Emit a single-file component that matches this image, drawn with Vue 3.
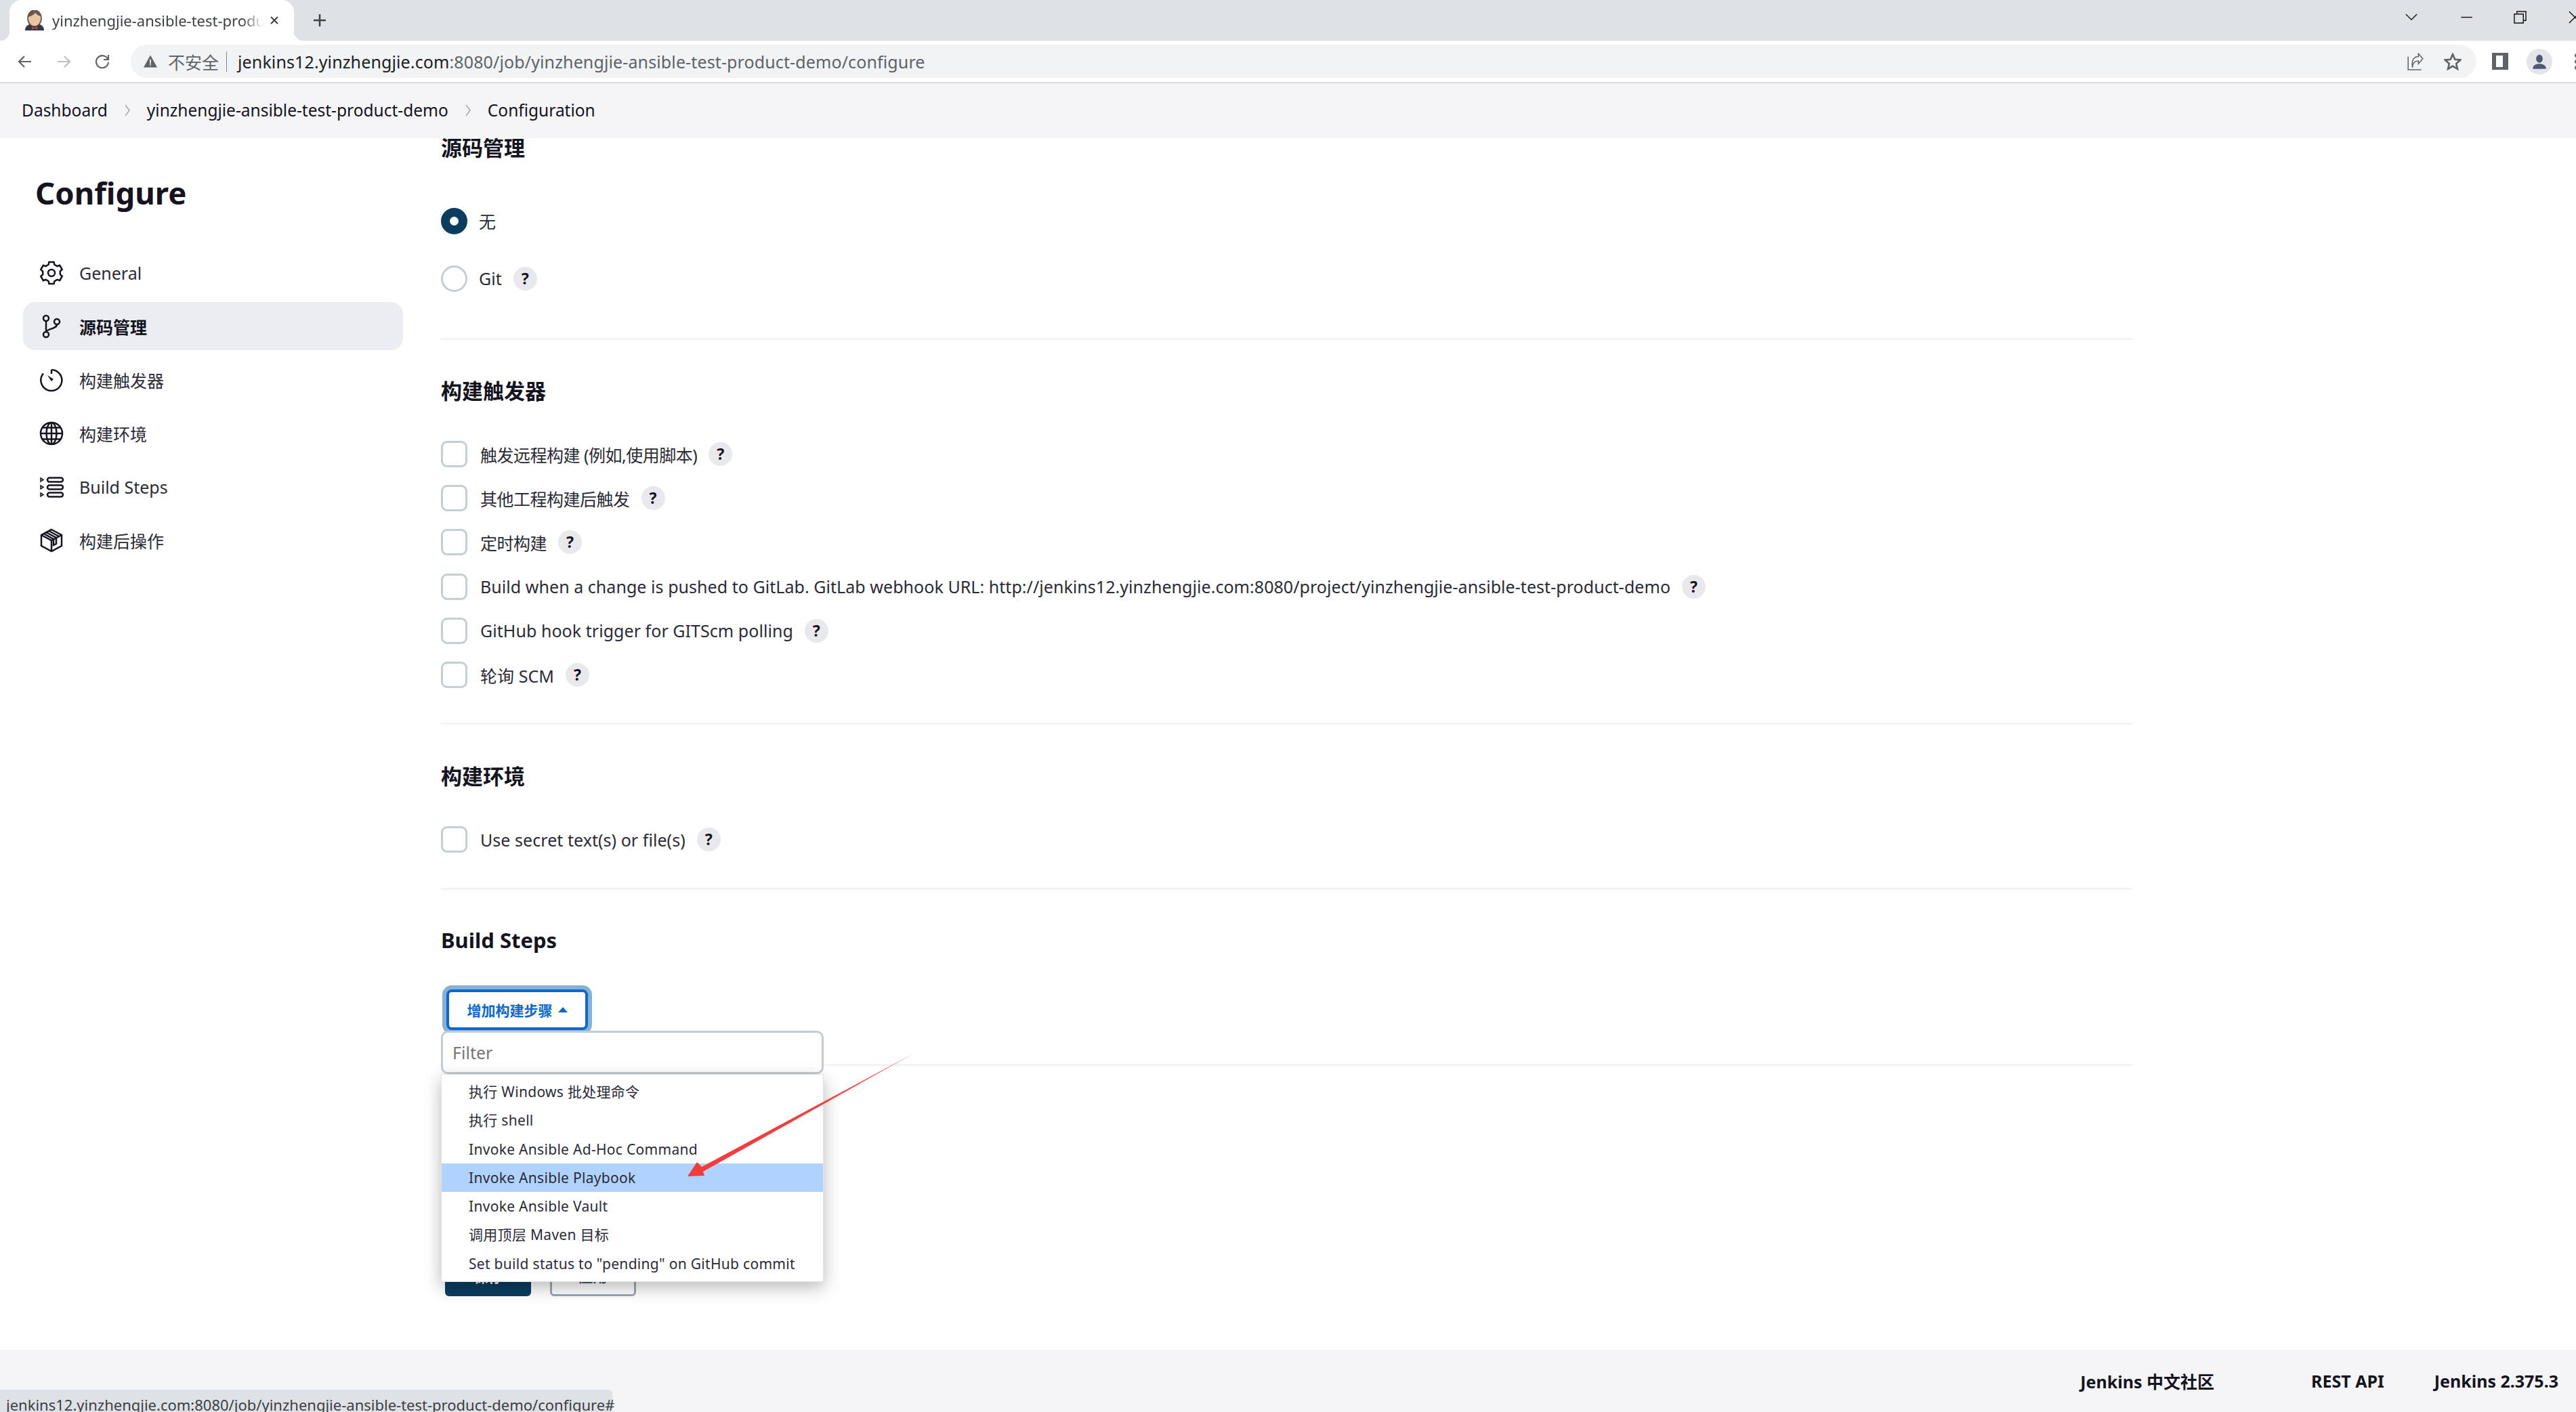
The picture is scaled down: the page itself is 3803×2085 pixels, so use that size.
<template>
  <div class="page">
    <!-- browser tabs -->
    <div class="tabstrip">
      <div class="tab">
        <svg class="favicon" viewBox="0 0 30 30">
          <path d="M1 30c0-7 5-10 14-10s14 3 14 10z" fill="#2f3a4a" />
          <ellipse cx="15" cy="12" rx="10" ry="12" fill="#e8c5a5" stroke="#5a4638" stroke-width="1.5" />
          <path d="M6 10C6 3 11 0 15 0s9 3 9 9c-4-1-6-3-8-5-2 3-6 5-10 6z" fill="#6b5a4c" />
          <path d="M11 24l4 2 4-2v5l-4-2-4 2z" fill="#d33833" />
        </svg>
        <span class="tab-title">yinzhengjie-ansible-test-product-demo</span>
        <svg class="tab-close" viewBox="0 0 14 14"><path d="M2 2l10 10M12 2L2 12" /></svg>
      </div>
      <svg class="new-tab" viewBox="0 0 20 20"><path d="M10 1v18M1 10h18" /></svg>
      <div class="spacer"></div>
      <svg class="win chev" viewBox="0 0 20 12"><path d="M1 1l9 9 9-9" /></svg>
      <svg class="win min" viewBox="0 0 20 12"><path d="M1 6h18" /></svg>
      <svg class="win restore" viewBox="0 0 20 20"><path d="M1 5h14v14H1zM5 5V1h14v14h-4" /></svg>
      <svg class="win close" viewBox="0 0 20 20"><path d="M1 1l18 18M19 1L1 19" /></svg>
    </div>

    <!-- address bar -->
    <div class="toolbar">
      <svg class="nav-ic" viewBox="0 0 24 24"><path d="M21 12H4M11 4l-8 8 8 8" /></svg>
      <svg class="nav-ic off" viewBox="0 0 24 24"><path d="M3 12h17M13 4l8 8-8 8" /></svg>
      <svg class="nav-ic" viewBox="0 0 24 24"><path d="M20 8a9 9 0 1 0 1 5M21 2v7h-7" /></svg>
      <div class="omnibox">
        <svg class="warn" viewBox="0 0 22 20">
          <path d="M11 0l11 20H0z" fill="#5f6368" />
          <path d="M10 7h2v7h-2zM10 15h2v2h-2z" fill="#f1f3f4" />
        </svg>
        <span class="insecure">不安全</span>
        <span class="sep"></span>
        <span class="url"><b>jenkins12.yinzhengjie.com</b>:8080/job/yinzhengjie-ansible-test-product-demo/configure</span>
        <div class="spacer"></div>
        <svg class="bar-ic share" viewBox="0 0 24 24">
          <path d="M2 5v18h18M8 20c0-6 3-9 8-9v4l6-7-6-7v4c-6 0-10 5-8 15z" />
        </svg>
        <svg class="bar-ic star" viewBox="0 0 24 24">
          <path d="M12 2l3 7 7.500 .7-5.700 5 1.700 7.300-6.500-3.900-6.500 3.900 1.700-7.300-5.700-5 7.500-.7z" />
        </svg>
      </div>
      <span class="side-panel"><i></i></span>
      <span class="avatar">
        <svg viewBox="0 0 24 24"><ellipse cx="12" cy="8" rx="4.500" ry="5.500" /><path d="M3 22c0-5 4-7 9-7s9 2 9 7z" /></svg>
      </span>
      <span class="kebab"><i></i><i></i><i></i></span>
    </div>

    <!-- breadcrumbs -->
    <div class="crumbs">
      <template v-for="(c, i) in crumbs" :key="c">
        <svg v-if="i > 0" class="crumb-sep" viewBox="0 0 10 20"><path d="M2 2l6 8-6 8" /></svg>
        <span>{{ c }}</span>
      </template>
    </div>

    <div class="content">
      <aside class="sidebar">
        <h1 class="title">Configure</h1>
        <div class="nav-item">
          <svg class="side-ic" viewBox="0 0 36 36"><path :d="gearPath" /><circle cx="18" cy="18" r="5" /></svg>
          <span>General</span>
        </div>
        <div class="nav-item active">
          <svg class="side-ic" viewBox="0 0 36 36">
            <circle cx="10" cy="6" r="4" /><circle cx="10" cy="30" r="4" /><circle cx="26" cy="11" r="4" />
            <path d="M10 10v16M26 15c0 7-14 6-16 11" />
          </svg>
          <span>源码管理</span>
        </div>
        <div class="nav-item">
          <svg class="side-ic" viewBox="0 0 36 36">
            <path d="M18 3a15.500 15.500 0 1 1-12 5.500M18 3v6" />
            <path class="needle" d="M12 11l9 6-3 3z" />
          </svg>
          <span>构建触发器</span>
        </div>
        <div class="nav-item">
          <svg class="side-ic" viewBox="0 0 36 36">
            <circle cx="18" cy="18" r="16" />
            <ellipse cx="18" cy="18" rx="7.500" ry="16" />
            <path d="M18 2v32M2 18h32M5 9.500h26M5 26.500h26" />
          </svg>
          <span>构建环境</span>
        </div>
        <div class="nav-item">
          <svg class="side-ic" viewBox="0 0 36 36">
            <rect x="12" y="4.500" width="23" height="6" rx="3" />
            <rect x="12" y="15.500" width="23" height="6" rx="3" />
            <rect x="12" y="26.500" width="23" height="6" rx="3" />
            <path class="thin" d="M2 5l4 2.500-4 2.500zM2 16l4 2.500-4 2.500zM2 27l4 2.500-4 2.500z" />
          </svg>
          <span>Build Steps</span>
        </div>
        <div class="nav-item">
          <svg class="side-ic" viewBox="0 0 36 36">
            <path d="M18 2l15 8v16l-15 8-15-8V10zM3 10l15 8 15-8M18 18v16" />
            <path d="M10 6l15 8v9l-4 2v-9L6.500 8M14 4l15 8" />
          </svg>
          <span>构建后操作</span>
        </div>
      </aside>

      <main class="main">
        <section class="sec first">
          <h2>源码管理</h2>
          <label class="radio-row"><input type="radio" name="scm" checked /><span>无</span></label>
          <label class="radio-row"><input type="radio" name="scm" /><span>Git</span><em class="help">?</em></label>
        </section>

        <section class="sec triggers">
          <h2>构建触发器</h2>
          <label v-for="(t, i) in triggers" :key="t" class="check-row">
            <input type="checkbox" /><span :class="{ tight: i < 3 }">{{ t }}</span><em class="help">?</em>
          </label>
        </section>

        <section class="sec env">
          <h2>构建环境</h2>
          <label class="check-row">
            <input type="checkbox" /><span>Use secret text(s) or file(s)</span><em class="help">?</em>
          </label>
        </section>

        <section class="sec steps">
          <h2>Build Steps</h2>
          <div class="add-wrap">
            <button class="add-btn">增加构建步骤<i class="caret"></i></button>
            <div class="dropdown">
              <input class="filter" type="text" placeholder="Filter" />
              <ul class="menu">
                <li v-for="(s, i) in buildSteps" :key="s" :class="{ hover: i === 3 }">{{ s }}</li>
              </ul>
            </div>
          </div>
        </section>

        <div class="actions">
          <button class="save">保存</button>
          <button class="apply">应用</button>
        </div>
      </main>
    </div>

    <footer class="footer">
      <span>Jenkins 中文社区</span>
      <span class="rest">REST API</span>
      <span class="ver">Jenkins 2.375.3</span>
    </footer>

    <!-- link preview, bottom left -->
    <div class="status">jenkins12.yinzhengjie.com:8080/job/yinzhengjie-ansible-test-product-demo/configure#</div>

    <!-- red annotation arrow drawn on the screenshot -->
    <svg class="arrow" viewBox="0 0 3803 2085">
      <defs>
        <linearGradient id="arrowFade" x1="1350" y1="1555" x2="1015" y2="1737" gradientUnits="userSpaceOnUse">
          <stop offset="0" stop-color="#ff6a6a" />
          <stop offset="0.4" stop-color="#f43f3f" />
          <stop offset="1" stop-color="#f63a3a" />
        </linearGradient>
      </defs>
      <polygon points="1350,1555 1036,1723 1029,1716 1015,1737 1040,1736 1038,1730" fill="url(#arrowFade)" />
    </svg>
  </div>
</template>

<script setup>
const crumbs = ['Dashboard', 'yinzhengjie-ansible-test-product-demo', 'Configuration']

const triggers = [
  '触发远程构建 (例如,使用脚本)',
  '其他工程构建后触发',
  '定时构建',
  'Build when a change is pushed to GitLab. GitLab webhook URL: http://jenkins12.yinzhengjie.com:8080/project/yinzhengjie-ansible-test-product-demo',
  'GitHub hook trigger for GITScm polling',
  '轮询 SCM'
]

const buildSteps = [
  '执行 Windows 批处理命令',
  '执行 shell',
  'Invoke Ansible Ad-Hoc Command',
  'Invoke Ansible Playbook',
  'Invoke Ansible Vault',
  '调用顶层 Maven 目标',
  'Set build status to "pending" on GitHub commit'
]

// six lobed cog outline for the General icon
const gearPts = []
for (let i = 0; i < 6; i++) {
  const a = (i * Math.PI) / 3 - Math.PI / 2
  const pt = (r, d) => `${(18 + r * Math.cos(a + d)).toFixed(2)} ${(18 + r * Math.sin(a + d)).toFixed(2)}`
  gearPts.push(pt(16.5, -0.22), pt(16.5, 0.22), pt(13, 0.34), pt(13, 0.7))
}
const gearPath = 'M' + gearPts.join('L') + 'Z'
</script>

<style>
html,
body {
  margin: 0;
  background: #fff;
  overflow: hidden;
}
</style>

<style scoped>
* {
  box-sizing: border-box;
}

.page {
  position: relative;
  width: 3803px;
  height: 2085px;
  display: flex;
  flex-direction: column;
  overflow: hidden;
  font-family: 'Noto Sans', 'Noto Sans CJK SC', sans-serif;
  font-size: 25px;
  color: #14141f;
}

.spacer {
  flex: 1;
}

.tabstrip {
  height: 60px;
  background: #dee1e6;
  display: flex;
  align-items: center;
  flex: none;
}

.tab {
  position: relative;
  width: 420px;
  height: 60px;
  margin-left: 14px;
  background: #fff;
  border-radius: 18px 18px 0 0;
  display: flex;
  align-items: center;
  padding-left: 22px;
}

/* flared bottom corners of the active tab */
.tab::before,
.tab::after {
  content: '';
  position: absolute;
  bottom: 0;
  width: 14px;
  height: 14px;
}

.tab::before {
  left: -14px;
  background: radial-gradient(circle at 0 0, #dee1e6 14px, #fff 14.500px);
}

.tab::after {
  right: -14px;
  background: radial-gradient(circle at 100% 0, #dee1e6 14px, #fff 14.500px);
}

.favicon {
  width: 30px;
  height: 30px;
  flex: none;
}

.tab-title {
  width: 312px;
  margin-left: 11px;
  overflow: hidden;
  white-space: nowrap;
  font-size: 22px;
  color: #3c4043;
  -webkit-mask-image: linear-gradient(to right, #000 90%, transparent);
  mask-image: linear-gradient(to right, #000 90%, transparent);
}

.tab-close {
  width: 14px;
  height: 14px;
  margin-left: 9px;
  fill: none;
  stroke: #3c4043;
  stroke-width: 2;
}

.new-tab {
  width: 20px;
  height: 20px;
  margin-left: 28px;
  fill: none;
  stroke: #3c4043;
  stroke-width: 2.5;
}

.win {
  fill: none;
  stroke: #111;
  stroke-width: 1.5;
  flex: none;
  margin-top: -10px;
}

.chev {
  width: 18px;
  height: 11px;
  margin-right: 63px;
}

.min {
  width: 19px;
  height: 11px;
  margin-right: 60px;
}

.restore {
  width: 19px;
  height: 19px;
  margin-right: 62px;
}

.close {
  width: 19px;
  height: 19px;
  margin-right: -8px;
}

.toolbar {
  height: 63px;
  flex: none;
  background: #fff;
  border-bottom: 2px solid #dadce0;
  display: flex;
  align-items: center;
  padding-left: 25px;
}

.nav-ic {
  width: 24px;
  height: 24px;
  margin-right: 33px;
  fill: none;
  stroke: #5f6368;
  stroke-width: 2.2;
  flex: none;
}

.nav-ic.off {
  stroke: #bcc0c4;
}

.omnibox {
  width: 3463px;
  height: 49px;
  margin-left: -3px;
  border-radius: 25px;
  background: #f1f3f4;
  display: flex;
  align-items: center;
  padding-left: 19px;
  flex: none;
}

.warn {
  width: 20px;
  height: 19px;
  flex: none;
}

.insecure {
  margin-left: 16px;
  color: #5f6368;
  font-size: 25px;
}

.sep {
  width: 1px;
  height: 30px;
  margin: 0 16px 0 11px;
  background: #80868b;
}

.url {
  color: #5f6368;
  white-space: nowrap;
  letter-spacing: 0.12px;
}

.url b {
  color: #202124;
  font-weight: 400;
}

.bar-ic {
  width: 26px;
  height: 26px;
  fill: none;
  stroke: #5f6368;
  flex: none;
}

.share {
  stroke-width: 1.4;
  margin-right: 29px;
}

.star {
  stroke-width: 2.4;
  margin-right: 22px;
}

.side-panel {
  width: 24px;
  height: 25px;
  margin-left: 23px;
  background: #5f6368;
  padding: 4px 8px 4px 6px;
  flex: none;
}

.side-panel i {
  display: block;
  width: 10px;
  height: 17px;
  background: #fff;
}

.avatar {
  width: 38px;
  height: 38px;
  margin-left: 27px;
  border-radius: 50%;
  background: #e3e5ea;
  display: flex;
  align-items: center;
  justify-content: center;
  flex: none;
}

.avatar svg {
  width: 26px;
  height: 26px;
  fill: #505b73;
}

.kebab {
  margin-left: 33px;
  display: flex;
  flex-direction: column;
  gap: 3px;
  flex: none;
}

.kebab i {
  display: block;
  width: 6px;
  height: 6px;
  border-radius: 50%;
  background: #5f6368;
}

.crumbs {
  height: 81px;
  flex: none;
  background: #f5f5f7;
  display: flex;
  align-items: center;
  padding-left: 32px;
  padding-bottom: 2px;
  font-size: 24.500px;
}

.crumb-sep {
  width: 10px;
  height: 20px;
  margin: 0 24px;
  fill: none;
  stroke: #a8a8b4;
  stroke-width: 1.6;
}

.content {
  flex: 1;
  min-height: 0;
  display: flex;
  overflow: hidden;
}

.sidebar {
  width: 561px;
  margin-left: 34px;
  flex: none;
}

.title {
  margin: 50px 0 53px 18px;
  font-size: 45.500px;
  line-height: 60px;
  font-weight: 700;
}

.nav-item {
  height: 71px;
  margin-bottom: 8px;
  border-radius: 18px;
  display: flex;
  align-items: center;
  padding-left: 24px;
  color: #2b2b36;
}

.nav-item.active {
  background: #ecedf2;
  font-weight: 700;
  color: #14141f;
}

.side-ic {
  width: 36px;
  height: 36px;
  margin-right: 23px;
  fill: none;
  stroke: #14141f;
  stroke-width: 2.500;
  flex: none;
}

.side-ic .needle {
  fill: #14141f;
  stroke: none;
}

.side-ic .thin {
  stroke-width: 1.500;
}

.main {
  width: 2497px;
  margin-left: 56px;
  flex: none;
}

.sec {
  border-bottom: 3px solid #f4f4f7;
}

.sec h2 {
  margin: 0;
  height: 44px;
  font-size: 31px;
  line-height: 44px;
  font-weight: 700;
}

.first {
  margin-top: -8px;
  height: 306px;
}

.first h2 {
  margin-bottom: 43.500px;
}

.triggers {
  padding-top: 53px;
  height: 568px;
}

.triggers h2 {
  margin-bottom: 39px;
}

.env {
  padding-top: 54px;
  height: 244px;
}

.env h2 {
  margin-bottom: 39px;
}

.steps {
  padding-top: 52px;
  height: 260px;
}

.radio-row,
.check-row {
  display: flex;
  align-items: center;
  white-space: nowrap;
  color: #2b2b36;
  letter-spacing: 0.05px;
}

.tight {
  letter-spacing: -0.5px;
}

.radio-row {
  height: 85px;
}

.check-row {
  height: 65.200px;
}

.radio-row input,
.check-row input {
  appearance: none;
  width: 39px;
  height: 39px;
  margin: 0 19px 0 0;
  border: 3px solid #c3ced5;
  background: #fff;
  flex: none;
}

.radio-row input {
  margin-right: 17px;
  border-radius: 50%;
}

.radio-row input:checked {
  border: 13px solid #0b3d60;
}

.check-row input {
  border-radius: 9px;
}

.help {
  width: 35px;
  height: 35px;
  margin-left: 17px;
  border-radius: 50%;
  background: #e9e9ed;
  font-style: normal;
  font-weight: 700;
  font-size: 23px;
  line-height: 35px;
  text-align: center;
  color: #14141f;
  flex: none;
}

.add-wrap {
  position: relative;
  margin-top: 51px;
  padding-left: 8px;
}

.add-btn {
  width: 209px;
  height: 60px;
  border: 4px solid #0b66d6;
  border-radius: 8px;
  background: #fff;
  box-shadow: 0 0 0 6px #84b3d2;
  color: #0b66d6;
  font: 700 21px 'Noto Sans', 'Noto Sans CJK SC', sans-serif;
  display: flex;
  align-items: center;
  justify-content: center;
  padding: 0;
}

.caret {
  margin-left: 8px;
  border-left: 7px solid transparent;
  border-right: 7px solid transparent;
  border-bottom: 8px solid #0b66d6;
}

.dropdown {
  position: absolute;
  left: 0;
  top: 61px;
  width: 565px;
  z-index: 5;
}

.filter {
  display: block;
  width: 100%;
  height: 64px;
  border: 3px solid #c3ccd3;
  border-radius: 10px;
  padding: 0 14px;
  font: 25px 'Noto Sans', 'Noto Sans CJK SC', sans-serif;
  background: #fff;
  outline: none;
}

.filter::placeholder {
  color: #757575;
}

.menu {
  list-style: none;
  margin: 0;
  padding: 4px 0 5px;
  background: #fff;
  border: 1px solid #dfe3e6;
  box-shadow: 0 8px 24px rgba(0, 0, 0, 0.28);
}

.menu li {
  height: 42.300px;
  padding-left: 40px;
  line-height: 42.300px;
  font-size: 21px;
  letter-spacing: 0.3px;
  color: #2b2b36;
  white-space: nowrap;
}

.menu li.hover {
  background: #b0d2ff;
}

.actions {
  display: flex;
  margin-top: 280px;
  padding-left: 6px;
}

.actions button {
  width: 127px;
  height: 60px;
  border-radius: 6px;
  font: 700 21px 'Noto Sans', 'Noto Sans CJK SC', sans-serif;
  padding: 0;
}

.save {
  background: #0b3d60;
  border: none;
  color: #fff;
}

.apply {
  margin-left: 28px;
  background: #fff;
  border: 3px solid #9aa7b2;
  color: #4a5568;
}

.footer {
  height: 92px;
  flex: none;
  background: #f5f5f7;
  display: flex;
  align-items: center;
  justify-content: flex-end;
  padding: 0 26px 0 0;
  font-weight: 700;
}

.rest {
  margin-left: 143px;
}

.ver {
  margin-left: 74px;
}

.status {
  position: absolute;
  left: 0;
  bottom: 0;
  width: 904px;
  height: 33px;
  padding-left: 9px;
  background: #dee1e6;
  border-radius: 0 6px 0 0;
  font-size: 22px;
  line-height: 44px;
  color: #3c4043;
  white-space: nowrap;
  z-index: 6;
}

.arrow {
  position: absolute;
  left: 0;
  top: 0;
  width: 3803px;
  height: 2085px;
  pointer-events: none;
  z-index: 7;
}
</style>
